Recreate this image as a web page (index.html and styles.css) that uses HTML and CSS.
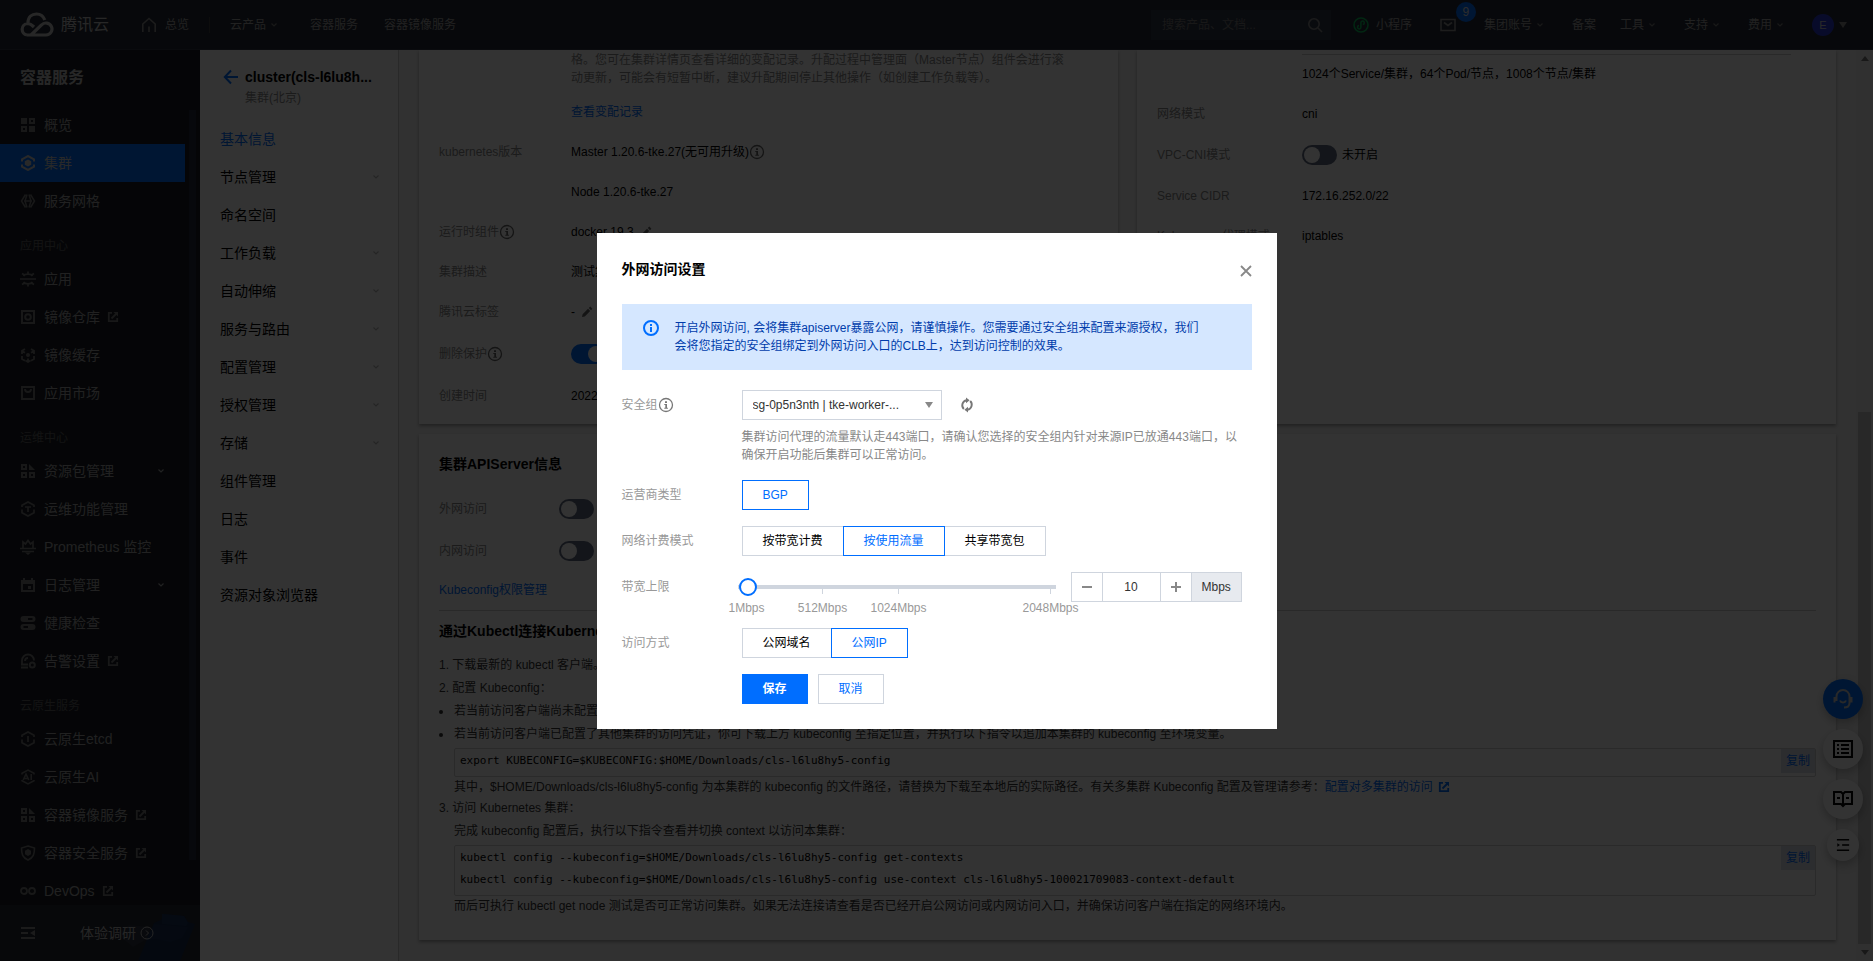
FILE: index.html
```html
<!DOCTYPE html>
<html lang="zh-CN">
<head>
<meta charset="utf-8">
<title>容器服务 - 腾讯云</title>
<link rel="stylesheet" href="styles.css">
</head>
<body>
<svg class="defs" aria-hidden="true">
  <symbol id="chev" viewBox="0 0 8 8"><path d="M1.500 2.500L4 5l2.500-2.500" fill="none" stroke="currentColor" stroke-width="1.200"/></symbol>
  <symbol id="ext" viewBox="0 0 12 12"><path d="M5 1.800H1.800v8.400h8.400V7M4.500 7.500l5-5" fill="none" stroke="currentColor" stroke-width="1.800"/><path d="M6.500 1H11v4.500z" fill="currentColor"/></symbol>
  <symbol id="info" viewBox="0 0 16 16"><circle cx="8" cy="8" r="6.500" fill="none" stroke="currentColor" stroke-width="1.300"/><path d="M7 4.200h2v1.800H7zM6.300 7H9v4.500H7.300V8.100h-1zM6.300 10.700h3.600v1.100H6.300z" fill="currentColor"/></symbol>
  <symbol id="pen" viewBox="0 0 12 12"><path d="M1 11l.6-2.800L7 2.800 9.200 5 3.800 10.400zM7.800 2L9.300.6l2.100 2.100L10 4.200z" fill="currentColor"/></symbol>
  <symbol id="i-grid" viewBox="0 0 16 16"><path d="M1 1h6v6H1zM9 1h6v6H9zM1 9h6v6H1zM9 9h6v6H9zM11 3v2h2V3zM3 11v2h2v-2z" fill="currentColor" fill-rule="evenodd"/></symbol>
  <symbol id="i-cluster" viewBox="0 0 16 16"><path d="M2 6.500V4.300L8 1l6 3.300v2.200M2 9.500v2.200L8 15l6-3.300V9.500" fill="none" stroke="currentColor" stroke-width="2"/><path d="M8 4.500l3.200 1.800v3.500L8 11.500 4.800 9.800V6.300z" fill="currentColor"/></symbol>
  <symbol id="i-mesh" viewBox="0 0 16 16"><path d="M5.500 1.500L1.500 8l4 6.500M10.500 1.500l4 6.500-4 6.500M7 1.500L5 8l2 6.500M9 1.500L11 8l-2 6.500M4 8h8" fill="none" stroke="currentColor" stroke-width="1.500"/></symbol>
  <symbol id="i-app" viewBox="0 0 16 16"><path d="M0 8h16M3.500 5c1.500-2.500 7.500-2.500 9 0M3.500 11c1.500 2.500 7.500 2.500 9 0M8 .5v2.500M8 13v2.500M2 2.500l2.500 1.500M14 2.500L11.500 4M2 13.500L4.500 12M14 13.500L11.500 12" fill="none" stroke="currentColor" stroke-width="1.700"/></symbol>
  <symbol id="i-repo" viewBox="0 0 16 16"><path d="M2 2h12v12H2z" fill="none" stroke="currentColor" stroke-width="2"/><circle cx="8" cy="8" r="2.800" fill="none" stroke="currentColor" stroke-width="2"/></symbol>
  <symbol id="i-cache" viewBox="0 0 16 16"><path d="M5 2L2 3.800V7M11 2l3 1.800V7M2 9v3l3 1.800M14 9v3l-3 1.800M8 11.500V15M5.500 13.500L8 15l2.500-1.500M2 4l3 1.800M14 4l-3 1.800" fill="none" stroke="currentColor" stroke-width="1.800"/><circle cx="8" cy="8" r="2" fill="currentColor"/></symbol>
  <symbol id="i-market" viewBox="0 0 16 16"><path d="M2 2h12v12H2zM5 4c0 4 6 4 6 0" fill="none" stroke="currentColor" stroke-width="1.900"/></symbol>
  <symbol id="i-pack" viewBox="0 0 16 16"><path d="M2 2h4v4H2zM2 10h4v4H2zM10 10h4v4h-4z" fill="none" stroke="currentColor" stroke-width="2"/><path d="M9 1l6 6H9z" fill="currentColor"/></symbol>
  <symbol id="i-hexT" viewBox="0 0 16 16"><path d="M2 6V4.300L8 1l6 3.300V6M2 8.500v3.200L8 15l6-3.300V8.500M5 6h6M8 6v5" fill="none" stroke="currentColor" stroke-width="1.700"/></symbol>
  <symbol id="i-hexI" viewBox="0 0 16 16"><path d="M2 6V4.300L8 1l6 3.300V6M2 8.500v3.200L8 15l6-3.300V8.500M8 5v6" fill="none" stroke="currentColor" stroke-width="1.700"/></symbol>
  <symbol id="i-ai" viewBox="0 0 16 16"><path d="M2 5.500V4.300L8 1l6 3.300v1.200M2 11v.7L8 15l6-3.300V11" fill="none" stroke="currentColor" stroke-width="1.500"/><path d="M3.200 11L6 5.200 8.800 11M4.300 9.500h3.400M11.200 5v6" fill="none" stroke="currentColor" stroke-width="1.600"/></symbol>
  <symbol id="i-prom" viewBox="0 0 16 16"><path d="M0 9.500h16M2 12.500h12M3 9V3l2.500 2L8 1.500 10.500 5 13 3v6" fill="none" stroke="currentColor" stroke-width="1.700"/><path d="M5 13.500h6L8 16z" fill="currentColor"/></symbol>
  <symbol id="i-log" viewBox="0 0 16 16"><path d="M1 3h14v12H1zM3 7v6h10V7z" fill="currentColor" fill-rule="evenodd"/><path d="M3 1h2v3H3zM11 1h2v3h-2zM8 9h3v3H8z" fill="currentColor"/></symbol>
  <symbol id="i-health" viewBox="0 0 16 16"><path d="M3.500 1h9a2.900 2.900 0 010 6h-9a2.900 2.900 0 010-6zM8 3v2h4.500V3zM3.500 9h9a2.900 2.900 0 010 6h-9a2.900 2.900 0 010-6zm0 2v2H8v-2z" fill="currentColor" fill-rule="evenodd"/></symbol>
  <symbol id="i-alarm" viewBox="0 0 16 16"><path d="M2 12V7.500a6 6 0 0112 0M5 8a3 3 0 013-3M1 11.500h7M1 14.500h7" fill="none" stroke="currentColor" stroke-width="1.800"/><circle cx="12.300" cy="12" r="2.500" fill="none" stroke="currentColor" stroke-width="2"/></symbol>
  <symbol id="i-shield" viewBox="0 0 16 16"><path d="M8 1l6.500 2c0 6-1 9.500-6.500 12C2.500 12.500 1.500 9 1.500 3z" fill="none" stroke="currentColor" stroke-width="1.600"/><path d="M8 4l3 1.700v3.600L8 11 5 9.300V5.700z" fill="currentColor"/></symbol>
  <symbol id="i-devops" viewBox="0 0 16 16"><circle cx="4" cy="8" r="3" fill="none" stroke="currentColor" stroke-width="1.800"/><circle cx="12" cy="8" r="3" fill="none" stroke="currentColor" stroke-width="1.800"/></symbol>
  <symbol id="i-fold" viewBox="0 0 16 16"><path d="M1 3h14M1 8h7M1 13h14" stroke="currentColor" stroke-width="1.800"/><path d="M15 5v6l-5-3z" fill="currentColor"/></symbol>
</svg>

<header class="top">
  <svg class="logo" viewBox="0 0 34 26" fill="none" stroke="currentColor" stroke-width="3.200"><path d="M7 23a5.800 5.800 0 01.5-11.500c3 0 5 2 6.500 3.500M8 11C8 5 12 2 16.500 2c4 0 7 2.500 8.300 6M7 23h19a6 6 0 10-4.500-10L11 23"/></svg>
  <span class="brand">腾讯云</span>
  <a class="home" href="#"><svg class="i16" viewBox="0 0 16 16" fill="none" stroke="currentColor" stroke-width="1.600"><path d="M1.800 15V7L8 1.500 14.200 7v8M8 15V9.500"/></svg>总览</a>
  <span class="vline"></span>
  <a class="drop" href="#">云产品<svg class="i8"><use href="#chev"/></svg></a>
  <a class="svc" href="#">容器服务</a>
  <a class="svc2" href="#">容器镜像服务</a>
  <div class="top-right">
    <div class="search"><input type="text" aria-label="搜索" placeholder="搜索产品、文档..."><svg class="i16" viewBox="0 0 16 16" fill="none" stroke="currentColor" stroke-width="1.600"><circle cx="7" cy="7" r="5.200"/><path d="M11 11l4 4"/></svg></div>
    <a class="mini" href="#"><svg class="i16" viewBox="0 0 16 16" fill="none" stroke="currentColor" stroke-width="1.500"><circle cx="8" cy="8" r="7"/><path d="M6 8.500a1.700 1.700 0 101.900 1.700V5.800A1.700 1.700 0 119.800 7.500"/></svg>小程序</a>
    <a class="mail" href="#" aria-label="消息"><svg class="i16" viewBox="0 0 16 16" fill="none" stroke="currentColor" stroke-width="1.600"><path d="M1 2.500h14v11H1zM4 5.500l4 3 4-3"/></svg><b class="badge">9</b></a>
    <a class="drop" href="#">集团账号<svg class="i8"><use href="#chev"/></svg></a>
    <a class="beian" href="#">备案</a>
    <a class="drop" href="#">工具<svg class="i8"><use href="#chev"/></svg></a>
    <a class="drop" href="#">支持<svg class="i8"><use href="#chev"/></svg></a>
    <a class="drop" href="#">费用<svg class="i8"><use href="#chev"/></svg></a>
    <span class="avatar">E</span><span class="tri"></span>
  </div>
</header>

<div class="body">
  <aside class="side">
    <h2>容器服务</h2>
    <div class="side-scroll">
      <nav class="menu">
        <a href="#"><svg class="i16"><use href="#i-grid"/></svg>概览</a>
        <a href="#" class="on"><svg class="i16"><use href="#i-cluster"/></svg>集群</a>
        <a href="#"><svg class="i16"><use href="#i-mesh"/></svg>服务网格</a>
        <h3>应用中心</h3>
        <a href="#"><svg class="i16"><use href="#i-app"/></svg>应用</a>
        <a href="#"><svg class="i16"><use href="#i-repo"/></svg>镜像仓库<svg class="i12"><use href="#ext"/></svg></a>
        <a href="#"><svg class="i16"><use href="#i-cache"/></svg>镜像缓存</a>
        <a href="#"><svg class="i16"><use href="#i-market"/></svg>应用市场</a>
        <h3>运维中心</h3>
        <a href="#"><svg class="i16"><use href="#i-pack"/></svg>资源包管理<svg class="i8"><use href="#chev"/></svg></a>
        <a href="#"><svg class="i16"><use href="#i-hexT"/></svg>运维功能管理</a>
        <a href="#"><svg class="i16"><use href="#i-prom"/></svg>Prometheus 监控</a>
        <a href="#"><svg class="i16"><use href="#i-log"/></svg>日志管理<svg class="i8"><use href="#chev"/></svg></a>
        <a href="#"><svg class="i16"><use href="#i-health"/></svg>健康检查</a>
        <a href="#"><svg class="i16"><use href="#i-alarm"/></svg>告警设置<svg class="i12"><use href="#ext"/></svg></a>
        <h3>云原生服务</h3>
        <a href="#"><svg class="i16"><use href="#i-hexI"/></svg>云原生etcd</a>
        <a href="#"><svg class="i16"><use href="#i-ai"/></svg>云原生AI</a>
        <a href="#"><svg class="i16"><use href="#i-pack"/></svg>容器镜像服务<svg class="i12"><use href="#ext"/></svg></a>
        <a href="#"><svg class="i16"><use href="#i-shield"/></svg>容器安全服务<svg class="i12"><use href="#ext"/></svg></a>
        <a href="#"><svg class="i16"><use href="#i-devops"/></svg>DevOps<svg class="i12"><use href="#ext"/></svg></a>
      </nav>
      <div class="thumb"></div>
    </div>
    <div class="side-foot">
      <svg class="art" viewBox="0 0 100 56" aria-hidden="true"><path d="M5 22l12 6 12-8 22 2-4 12-14 8-12-10z" fill="#2e3340"/><path d="M38 56l16-38 7-3 3-6 20 2 4 6 7 2-15 37z" fill="#152a4e"/><path d="M62 9l22 2 4 7-2 3-24-2z" fill="#1b345c"/><path d="M54 19l34 3-6 11-12 4-14-3-10 1z" fill="#193055"/></svg>
      <svg class="i16"><use href="#i-fold"/></svg>
      <a href="#">体验调研<svg class="i14" viewBox="0 0 14 14" fill="none" stroke="currentColor"><circle cx="7" cy="7" r="6"/><path d="M6 4.500L8.500 7 6 9.500"/></svg></a>
    </div>
  </aside>

  <aside class="sub">
    <div class="sub-head">
      <svg class="i16" viewBox="0 0 16 16" fill="none" stroke="currentColor" stroke-width="2"><path d="M15 8H2M8 1.500L1.800 8 8 14.500"/></svg>
      <div><h1>cluster(cls-l6lu8h...</h1><p>集群(北京)</p></div>
    </div>
    <nav>
      <a href="#" class="on">基本信息</a>
      <a href="#">节点管理<svg class="i8"><use href="#chev"/></svg></a>
      <a href="#">命名空间</a>
      <a href="#">工作负载<svg class="i8"><use href="#chev"/></svg></a>
      <a href="#">自动伸缩<svg class="i8"><use href="#chev"/></svg></a>
      <a href="#">服务与路由<svg class="i8"><use href="#chev"/></svg></a>
      <a href="#">配置管理<svg class="i8"><use href="#chev"/></svg></a>
      <a href="#">授权管理<svg class="i8"><use href="#chev"/></svg></a>
      <a href="#">存储<svg class="i8"><use href="#chev"/></svg></a>
      <a href="#">组件管理</a>
      <a href="#">日志</a>
      <a href="#">事件</a>
      <a href="#">资源对象浏览器</a>
    </nav>
  </aside>

  <main class="main">
    <div class="pair">
      <section class="card basic">
        <div class="row note"><span class="k"></span><p>格。您可在集群详情页查看详细的变配记录。升配过程中管理面（Master节点）组件会进行滚<br>动更新，可能会有短暂中断，建议升配期间停止其他操作（如创建工作负载等）。</p></div>
        <div class="row"><span class="k"></span><a href="#">查看变配记录</a></div>
        <div class="row"><span class="k">kubernetes版本</span><span>Master 1.20.6-tke.27(无可用升级)</span><svg class="i16"><use href="#info"/></svg></div>
        <div class="row"><span class="k"></span><span>Node 1.20.6-tke.27</span></div>
        <div class="row"><span class="k">运行时组件<svg class="i16"><use href="#info"/></svg></span><span>docker 19.3</span><svg class="i12"><use href="#pen"/></svg></div>
        <div class="row"><span class="k">集群描述</span><span>测试集群</span></div>
        <div class="row"><span class="k">腾讯云标签</span><span>-</span><svg class="i12"><use href="#pen"/></svg></div>
        <div class="row protect"><span class="k">删除保护<svg class="i16"><use href="#info"/></svg></span><input class="toggle" type="checkbox" checked aria-label="删除保护"></div>
        <div class="row"><span class="k">创建时间</span><span>2022</span></div>
      </section>
      <section class="card network">
        <div class="row rule"><span class="k"></span><hr></div>
        <div class="row"><span class="k"></span><span>1024个Service/集群，64个Pod/节点，1008个节点/集群</span></div>
        <div class="row"><span class="k">网络模式</span><span>cni</span></div>
        <div class="row tall"><label class="k" for="vpc">VPC-CNI模式</label><input id="vpc" class="toggle" type="checkbox"><span class="state">未开启</span></div>
        <div class="row"><span class="k">Service CIDR</span><span>172.16.252.0/22</span></div>
        <div class="row"><span class="k">Kube-proxy 代理模式</span><span>iptables</span></div>
      </section>
    </div>
    <section class="card api">
      <h3>集群APIServer信息</h3>
      <div class="row tall"><label class="k" for="wan">外网访问</label><input id="wan" class="toggle" type="checkbox"></div>
      <div class="row tall"><label class="k" for="lan">内网访问</label><input id="lan" class="toggle" type="checkbox"></div>
      <div class="row"><a href="#">Kubeconfig权限管理</a></div>
      <hr>
      <h3>通过Kubectl连接Kubernetes集群操作说明</h3>
      <div class="guide">
        <p>1. 下载最新的 kubectl 客户端。</p>
        <p>2. 配置 Kubeconfig：</p>
        <ul>
          <li>若当前访问客户端尚未配置任何集群的访问凭证，可下载上方 kubeconfig 至默认位置。</li>
          <li>若当前访问客户端已配置了其他集群的访问凭证，你可下载上方 kubeconfig 至指定位置，并执行以下指令以追加本集群的 kubeconfig 至环境变量。</li>
        </ul>
        <div class="code"><pre>export KUBECONFIG=$KUBECONFIG:$HOME/Downloads/cls-l6lu8hy5-config</pre><button type="button">复制</button></div>
        <p class="ind">其中，$HOME/Downloads/cls-l6lu8hy5-config 为本集群的 kubeconfig 的文件路径，请替换为下载至本地后的实际路径。有关多集群 Kubeconfig 配置及管理请参考：<a href="#">配置对多集群的访问<svg class="i12"><use href="#ext"/></svg></a></p>
        <p>3. 访问 Kubernetes 集群：</p>
        <p class="ind">完成 kubeconfig 配置后，执行以下指令查看并切换 context 以访问本集群：</p>
        <div class="code"><pre>kubectl config --kubeconfig=$HOME/Downloads/cls-l6lu8hy5-config get-contexts
kubectl config --kubeconfig=$HOME/Downloads/cls-l6lu8hy5-config use-context cls-l6lu8hy5-100021709083-context-default</pre><button type="button">复制</button></div>
        <p class="ind">而后可执行 kubectl get node 测试是否可正常访问集群。如果无法连接请查看是否已经开启公网访问或内网访问入口，并确保访问客户端在指定的网络环境内。</p>
      </div>
    </section>
  </main>
  <div class="scrollbar"><i class="up"></i><div class="bar"></div><i class="down"></i></div>
</div>

<div class="floats">
  <button type="button" class="primary" aria-label="客服"><svg viewBox="0 0 20 20" fill="none" stroke="currentColor" stroke-width="2"><path d="M3.500 12V7.500a6.500 6.500 0 0113 0V14c0 3-1.500 4.500-5.500 4.500M1.500 8v5.500M18.500 8v5.500M7 11.500c1 2.500 5 2.500 6 0"/></svg></button>
  <button type="button" aria-label="清单"><svg viewBox="0 0 20 20" fill="none" stroke="currentColor" stroke-width="2"><path d="M1 2h18v16H1zM4 6h2M8 6h8M4 10h2M8 10h8M4 14h2M8 14h8"/></svg></button>
  <button type="button" aria-label="文档"><svg viewBox="0 0 20 20" fill="none" stroke="currentColor" stroke-width="2"><path d="M10 5L8 3H1v12h7l2 2 2-2h7V3h-7zM10 5v13M4 9h3M13 9h3"/></svg></button>
  <button type="button" class="small" aria-label="收起"><svg viewBox="0 0 16 16" fill="none" stroke="currentColor" stroke-width="1.800"><path d="M1 2h14M7 8h8M1 14h14"/><path d="M1.500 6v4l3-2z" fill="currentColor" stroke="none"/></svg></button>
</div>

<div class="mask">
  <form class="dialog" role="dialog" aria-labelledby="dlg-title">
    <div class="dlg-head">
      <h2 id="dlg-title">外网访问设置</h2>
      <button type="button" class="close" aria-label="关闭"><svg viewBox="0 0 12 12" fill="none" stroke="currentColor" stroke-width="1.800"><path d="M1 1l10 10M11 1L1 11"/></svg></button>
    </div>
    <div class="alert">
      <svg class="i16" viewBox="0 0 16 16"><circle cx="8" cy="8" r="7" fill="none" stroke="currentColor" stroke-width="2"/><path d="M7 4h2v2H7zM7 7h2v5H7z" fill="currentColor"/></svg>
      <p>开启外网访问, 会将集群apiserver暴露公网，请谨慎操作。您需要通过安全组来配置来源授权，我们会将您指定的安全组绑定到外网访问入口的CLB上，达到访问控制的效果。</p>
    </div>
    <div class="field">
      <label for="sg">安全组<svg class="i16"><use href="#info"/></svg></label>
      <div>
        <div class="line">
          <div class="select"><select id="sg"><option>sg-0p5n3nth | tke-worker-...</option></select><span class="tri"></span></div>
          <button type="button" class="refresh" aria-label="刷新"><svg viewBox="0 0 14 14" fill="none" stroke="currentColor" stroke-width="1.900"><path d="M3.800 11A5.200 5.200 0 016.500 2.200M10.200 3a5.200 5.200 0 01-2.700 8.800"/><path d="M6 -.6l3.600 2.900L6 5.200zM8 8.800l-3.600 2.900L8 14.600z" fill="currentColor" stroke="none"/></svg></button>
        </div>
        <p class="help">集群访问代理的流量默认走443端口，请确认您选择的安全组内针对来源IP已放通443端口，以确保开启功能后集群可以正常访问。</p>
      </div>
    </div>
    <div class="field"><span>运营商类型</span><div class="seg"><button type="button" class="on">BGP</button></div></div>
    <div class="field"><span>网络计费模式</span><div class="seg"><button type="button">按带宽计费</button><button type="button" class="on">按使用流量</button><button type="button">共享带宽包</button></div></div>
    <div class="field">
      <label for="bw">带宽上限</label>
      <div class="line top-align">
        <div class="slider">
          <input id="bw" type="range" min="1" max="2048" value="10">
          <div class="scale"><span>1Mbps</span><span>512Mbps</span><span>1024Mbps</span><span class="last">2048Mbps</span></div>
        </div>
        <div class="stepper"><button type="button" aria-label="减少"><svg viewBox="0 0 12 12" stroke="currentColor" stroke-width="2"><path d="M1 6h10"/></svg></button><input type="text" value="10" aria-label="带宽"><button type="button" aria-label="增加"><svg viewBox="0 0 12 12" stroke="currentColor" stroke-width="2"><path d="M1 6h10M6 1v10"/></svg></button><span>Mbps</span></div>
      </div>
    </div>
    <div class="field"><span>访问方式</span><div class="seg"><button type="button">公网域名</button><button type="button" class="on">公网IP</button></div></div>
    <div class="field"><span></span><div class="actions"><button type="submit" class="save">保存</button><button type="button">取消</button></div></div>
  </form>
</div>
</body>
</html>
```

FILE: styles.css
```css
* { box-sizing: border-box; }
html, body { height: 100%; }
body {
  margin: 0;
  display: flex;
  flex-direction: column;
  overflow: hidden;
  font: 12px/18px "Liberation Sans", "Noto Sans CJK SC", sans-serif;
  color: #000;
  background: #f2f2f2;
}
h1, h2, h3, p, ul, pre { margin: 0; padding: 0; }
ul { list-style: none; }
a { color: inherit; text-decoration: none; }
button, input, select { font: inherit; margin: 0; }
button { cursor: pointer; }
svg { flex: none; display: block; }
.defs { position: absolute; width: 0; height: 0; }
.i8 { width: 8px; height: 8px; }
.i12 { width: 12px; height: 12px; }
.i14 { width: 14px; height: 14px; }
.i16 { width: 16px; height: 16px; }
.tri { border: 4px solid transparent; border-top: 6px solid #888; border-bottom: 0; }

/* top bar */
.top {
  flex: none;
  height: 50px;
  padding: 0 26px 0 20px;
  display: flex;
  align-items: center;
  background: #262b38;
  border-bottom: 1px solid #333847;
  color: #a4a4a4;
}
.top a { display: flex; align-items: center; white-space: nowrap; }
.logo { width: 34px; height: 26px; color: #c4c4c4; }
.brand { margin-left: 7px; font-size: 16px; color: #c4c4c4; white-space: nowrap; }
.home { margin-left: 32px; gap: 8px; }
.home svg { color: #8c8c8c; }
.vline { width: 1px; height: 16px; margin: 0 20px; background: #444; }
.drop { gap: 4px; }
.drop .i8 { color: #777; }
.svc { margin-left: 32px; }
.svc2 { margin-left: 26px; }
.top-right { margin-left: auto; display: flex; align-items: center; gap: 28px; }
.search { width: 180px; height: 30px; margin-right: -6px; padding: 0 8px 0 11px; display: flex; align-items: center; background: #303848; color: #888; }
.search input { flex: 1; min-width: 0; padding: 0; border: 0; background: none; color: #aaa; }
.search input::placeholder { color: #777; }
.mini { gap: 7px; }
.mini svg { color: #0abf5b; }
.mail { position: relative; }
.mail svg { color: #909090; }
.badge { position: absolute; left: 16px; top: -15px; width: 20px; height: 20px; border-radius: 10px; background: #006eff; color: #ddd; font-weight: 400; line-height: 20px; text-align: center; }
.beian { margin-right: -4px; }
.avatar { width: 22px; height: 22px; border-radius: 11px; background: #2b3bd0; color: #ccc; font-size: 11px; line-height: 22px; text-align: center; }
.top .tri { margin-left: -23px; }

.body { flex: 1; min-height: 0; display: flex; }

/* product menu */
.side { flex: none; width: 200px; display: flex; flex-direction: column; background: #191d24; color: #a4a4a4; }
.side h2 { flex: none; height: 56px; padding-left: 20px; font-size: 16px; line-height: 56px; color: #c4c4c4; }
.side-scroll { flex: 1; min-height: 0; overflow: hidden; display: flex; }
.menu { width: 185px; }
.menu a { height: 38px; padding-left: 20px; display: flex; align-items: center; font-size: 14px; white-space: nowrap; }
.menu .i16 { margin-right: 8px; color: #787878; }
.menu .i12 { margin-left: 7px; color: #787878; }
.menu .i8 { margin-left: auto; margin-right: 20px; }
.menu .on { background: #006eff; color: #ccc; }
.menu .on .i16 { color: #ccc; }
.menu h3 { height: 40px; padding: 12px 0 0 20px; font-size: 12px; font-weight: 400; line-height: 28px; color: #606060; }
.thumb { width: 7px; height: 750px; margin: 4px 0 0 4px; background: #252b3d; }
.side-foot { position: relative; flex: none; height: 56px; padding-left: 20px; display: flex; align-items: center; gap: 44px; background: #252833; color: #888; }
.side-foot a { position: relative; display: flex; align-items: center; gap: 4px; font-size: 14px; color: #bbb; }
.art { position: absolute; right: 0; bottom: 0; width: 100px; height: 56px; }

/* cluster menu */
.sub { flex: none; width: 199px; padding-top: 17px; background: #fff; border-right: 1px solid #ccc; }
.sub-head { height: 53px; padding-left: 23px; display: flex; gap: 6px; }
.sub-head .i16 { margin-top: 2px; color: #006eff; }
.sub h1 { font-size: 14px; line-height: 20px; }
.sub p { line-height: 22px; color: #888; }
.sub nav a { height: 38px; padding: 0 18px 0 20px; display: flex; align-items: center; justify-content: space-between; font-size: 14px; }
.sub nav .on { color: #006eff; }
.sub .i8 { color: #bbb; }

/* content */
.main { flex: 1; min-width: 0; overflow: hidden; padding: 0 20px; }
.pair { display: grid; grid-template-columns: 1fr 1fr; gap: 19px; }
.card { background: #fff; box-shadow: 0 2px 3px rgba(0, 0, 0, .3); }
.card a { color: #006eff; }
.card hr { width: 100%; height: 1px; margin: 0; border: 0; background: #ccc; }
.row { min-height: 20px; margin-bottom: 20px; display: flex; align-items: center; white-space: nowrap; line-height: 20px; }
.k { flex: none; display: flex; align-items: center; color: #888; }
.row .i16 { color: #666; }
.row .i12 { margin-left: 6px; color: #666; }
.basic { padding: 1px 20px 0; }
.basic .k { width: 132px; }
.note { margin-bottom: 15px; line-height: 18px; color: #888; }
.protect { height: 24px; }
.basic .row:last-child { margin-bottom: 18px; }
.network { padding: 4px 45px 0 20px; }
.network .k { width: 145px; }
.rule { min-height: 0; margin-bottom: 9px; }
.rule hr { flex: 1; }
.tall { height: 22px; }
.state { margin-left: 5px; }
.toggle { appearance: none; flex: none; width: 35px; height: 20px; padding: 2px; border-radius: 10px; background: #606a80; display: flex; }
.toggle::before { content: ""; width: 16px; height: 16px; border-radius: 8px; background: #fff; }
.toggle:checked { background: #006eff; justify-content: flex-end; }
.api { margin-top: 10px; padding: 20px 20px 24px; }
.api h3 { font-size: 14px; line-height: 20px; }
.api > h3:first-child { margin-bottom: 24px; }
.api .k { width: 120px; }
.api .row:nth-of-type(2) { margin-bottom: 18px; }
.api .row:nth-of-type(3) { margin-bottom: 10px; }
.api hr { margin-bottom: 10px; }
.guide { padding-top: 13px; line-height: 23px; color: #333; }
.guide li { display: flex; align-items: center; gap: 11px; white-space: nowrap; }
.guide li::before { content: ""; flex: none; width: 4px; height: 4px; border-radius: 2px; background: #333; }
.ind { padding-left: 15px; }
.guide a svg { display: inline-block; margin-left: 5px; vertical-align: -2px; }
.code { margin: 2px 0 0 15px; padding: 1px 0 4px 5px; display: flex; justify-content: space-between; align-items: flex-start; border: 1px solid #d0d0d0; border-radius: 2px; color: #000; }
.code + .ind { line-height: 20px; }
.code pre { font: 11px/22px "DejaVu Sans Mono", monospace; }
.code button { width: 34px; height: 24px; margin: -1px 0 -2px; padding: 0; border: 0; background: #dde1e8; color: #006eff; }

.scrollbar { flex: none; width: 17px; display: flex; flex-direction: column; align-items: center; justify-content: space-between; background: #f0f0f0; padding: 6px 0; }
.scrollbar i { border: 4px solid transparent; }
.scrollbar .up { border-top: 0; border-bottom: 5px solid #777; }
.scrollbar .down { border-bottom: 0; border-top: 5px solid #777; }
.bar { width: 13px; height: 532px; margin: auto 0 6px; background: #c8c8c8; }

.floats { position: fixed; right: 10px; bottom: 100px; display: flex; flex-direction: column; align-items: center; gap: 10px; }
.floats button { width: 40px; height: 40px; padding: 0; display: grid; place-items: center; border: 0; border-radius: 20px; background: #fff; color: #000; box-shadow: 0 4px 10px rgba(0, 0, 0, .25); }
.floats svg { width: 20px; height: 20px; }
.floats .primary { background: #006eff; color: #ccc; }
.floats .small { width: 32px; height: 32px; }
.floats .small svg { width: 14px; height: 14px; }

/* dialog */
.mask { position: fixed; inset: 0; display: grid; place-items: center; background: rgba(0, 0, 0, .8); }
.dialog { width: 680px; padding: 25px; display: flex; flex-direction: column; gap: 16px; background: #fff; }
.dlg-head { height: 30px; display: flex; justify-content: space-between; }
.dlg-head h2 { font-size: 14px; line-height: 22px; }
.close { align-self: flex-start; margin-top: 7px; padding: 0; border: 0; background: none; color: #888; }
.close svg { width: 12px; height: 12px; }
.alert { margin-bottom: 4px; padding: 15px 43px 15px 21px; display: flex; gap: 16px; background: #d5e7ff; color: #003cab; }
.alert svg { margin-top: 1px; color: #006eff; }
.field { display: grid; grid-template-columns: 120px 1fr; color: #888; }
.field > label, .field > span { display: flex; align-items: center; height: 30px; color: #999; }
.field > label svg { color: #777; }
.line { display: flex; align-items: center; }
.top-align { align-items: flex-start; }
.select { width: 200px; display: grid; align-items: center; }
.select > * { grid-area: 1 / 1; }
.select select { appearance: none; width: 100%; height: 30px; padding: 0 10px; border: 1px solid #cfd5de; border-radius: 0; background: #fff; color: #333; }
.select .tri { justify-self: end; margin-right: 9px; pointer-events: none; }
.refresh { margin-left: 18px; padding: 0; border: 0; background: none; color: #777; }
.refresh svg { width: 14px; height: 14px; overflow: visible; }
.help { margin-top: 8px; padding-right: 12px; }
.seg { display: flex; }
.seg button, .actions button { height: 30px; padding: 0 20px; border: 1px solid #cfd5de; background: #fff; color: #000; }
.seg button + button { margin-left: -1px; }
.seg .on { z-index: 1; border-color: #006eff; color: #006eff; }
.slider { width: 314px; }
.slider input { appearance: none; display: block; width: 318px; height: 30px; margin-left: -4px; background: linear-gradient(#cfd5de, #cfd5de) center / 100% 4px no-repeat; }
.slider input::-webkit-slider-thumb { appearance: none; width: 18px; height: 18px; border: 2px solid #006eff; border-radius: 9px; background: #fff; }
.scale { display: grid; grid-template-columns: repeat(5, 76px); height: 23px; margin: -13px -33px 0; text-align: center; line-height: 12px; color: #999; }
.scale span::before { content: ""; display: block; width: 1px; height: 5px; margin: 0 auto 8px; background: #cfd5de; }
.scale span:first-child::before { background: none; }
.scale .last { grid-column: 5; }
.stepper { height: 30px; margin-left: 15px; display: flex; border: 1px solid #cfd5de; color: #333; }
.stepper button { width: 30px; padding: 0; display: grid; place-items: center; border: 0; background: #fff; color: #888; }
.stepper svg { width: 12px; height: 12px; }
.stepper input { width: 59px; padding: 0; border: solid #cfd5de; border-width: 0 1px; text-align: center; color: #333; }
.stepper span { padding: 0 10px; border-left: 1px solid #cfd5de; background: #e7eaef; line-height: 28px; }
.actions { display: flex; gap: 10px; }
.actions button { color: #006eff; }
.actions .save { border-color: #006eff; background: #006eff; color: #fff; font-weight: 700; }
```
